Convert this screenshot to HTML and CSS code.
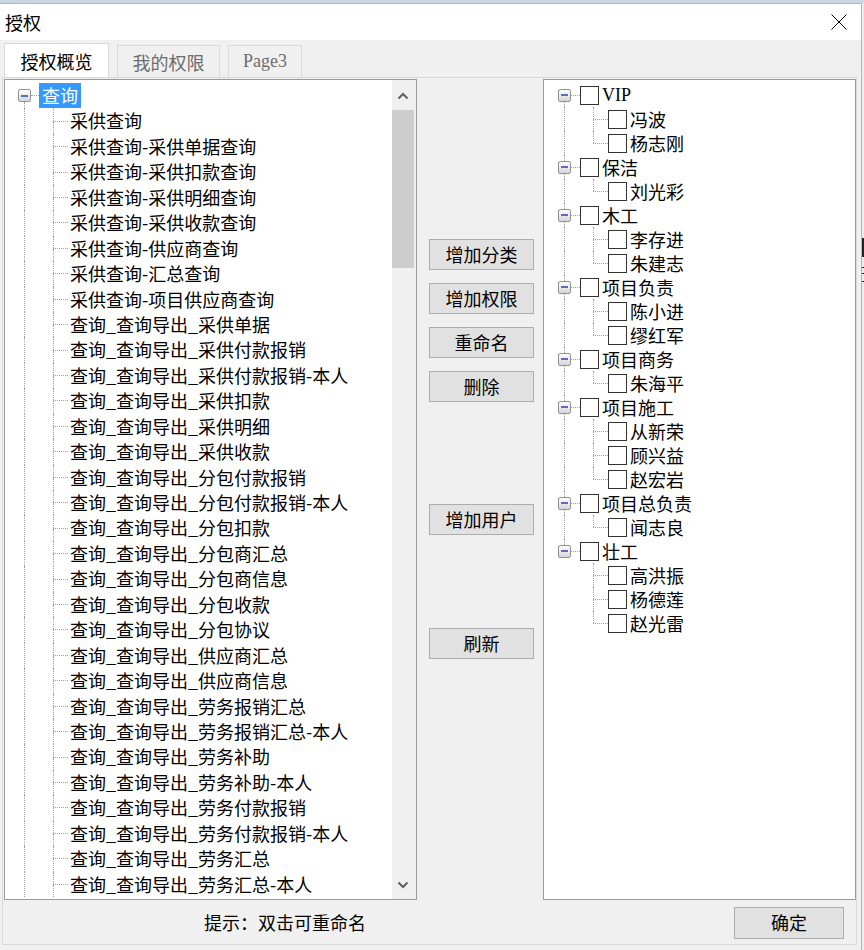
FILE: index.html
```html
<!DOCTYPE html>
<html lang="zh-CN">
<head>
<meta charset="utf-8">
<title>授权</title>
<link rel="stylesheet" href="styles.css">
</head>
<body>
<div class="desk-top"></div>
<div class="frame">
  <div class="window">
    <div class="titlebar">
      <span class="title">授权</span>
      <svg class="close" width="16" height="16" viewBox="0 0 16 16"><line x1="0.5" y1="0.5" x2="15.5" y2="15.5" stroke="#000" stroke-width="1"/><line x1="15.5" y1="0.5" x2="0.5" y2="15.5" stroke="#000" stroke-width="1"/></svg>
    </div>
    <div class="tabs">
      <div class="tab active">授权概览</div>
      <div class="tab t2">我的权限</div>
      <div class="tab t3 lat">Page3</div>
    </div>
    <div class="panel">
      <div class="main">
        <div class="tree left">
          <div class="tree-body">
            <div class="lrow"><span class="exp"><i class="seg"></i><b class="box"><i></i></b><i class="seg line"></i></span><span class="dash"><i></i></span><span class="sel">查询</span></div>
            <div class="lrow"><span class="g1 line"></span><span class="g2"><i class="u"></i><i class="h"></i><i class="d"></i></span><span class="txt">采供查询</span></div>
            <div class="lrow"><span class="g1 line"></span><span class="g2"><i class="u"></i><i class="h"></i><i class="d"></i></span><span class="txt">采供查询-采供单据查询</span></div>
            <div class="lrow"><span class="g1 line"></span><span class="g2"><i class="u"></i><i class="h"></i><i class="d"></i></span><span class="txt">采供查询-采供扣款查询</span></div>
            <div class="lrow"><span class="g1 line"></span><span class="g2"><i class="u"></i><i class="h"></i><i class="d"></i></span><span class="txt">采供查询-采供明细查询</span></div>
            <div class="lrow"><span class="g1 line"></span><span class="g2"><i class="u"></i><i class="h"></i><i class="d"></i></span><span class="txt">采供查询-采供收款查询</span></div>
            <div class="lrow"><span class="g1 line"></span><span class="g2"><i class="u"></i><i class="h"></i><i class="d"></i></span><span class="txt">采供查询-供应商查询</span></div>
            <div class="lrow"><span class="g1 line"></span><span class="g2"><i class="u"></i><i class="h"></i><i class="d"></i></span><span class="txt">采供查询-汇总查询</span></div>
            <div class="lrow"><span class="g1 line"></span><span class="g2"><i class="u"></i><i class="h"></i><i class="d"></i></span><span class="txt">采供查询-项目供应商查询</span></div>
            <div class="lrow"><span class="g1 line"></span><span class="g2"><i class="u"></i><i class="h"></i><i class="d"></i></span><span class="txt">查询_查询导出_采供单据</span></div>
            <div class="lrow"><span class="g1 line"></span><span class="g2"><i class="u"></i><i class="h"></i><i class="d"></i></span><span class="txt">查询_查询导出_采供付款报销</span></div>
            <div class="lrow"><span class="g1 line"></span><span class="g2"><i class="u"></i><i class="h"></i><i class="d"></i></span><span class="txt">查询_查询导出_采供付款报销-本人</span></div>
            <div class="lrow"><span class="g1 line"></span><span class="g2"><i class="u"></i><i class="h"></i><i class="d"></i></span><span class="txt">查询_查询导出_采供扣款</span></div>
            <div class="lrow"><span class="g1 line"></span><span class="g2"><i class="u"></i><i class="h"></i><i class="d"></i></span><span class="txt">查询_查询导出_采供明细</span></div>
            <div class="lrow"><span class="g1 line"></span><span class="g2"><i class="u"></i><i class="h"></i><i class="d"></i></span><span class="txt">查询_查询导出_采供收款</span></div>
            <div class="lrow"><span class="g1 line"></span><span class="g2"><i class="u"></i><i class="h"></i><i class="d"></i></span><span class="txt">查询_查询导出_分包付款报销</span></div>
            <div class="lrow"><span class="g1 line"></span><span class="g2"><i class="u"></i><i class="h"></i><i class="d"></i></span><span class="txt">查询_查询导出_分包付款报销-本人</span></div>
            <div class="lrow"><span class="g1 line"></span><span class="g2"><i class="u"></i><i class="h"></i><i class="d"></i></span><span class="txt">查询_查询导出_分包扣款</span></div>
            <div class="lrow"><span class="g1 line"></span><span class="g2"><i class="u"></i><i class="h"></i><i class="d"></i></span><span class="txt">查询_查询导出_分包商汇总</span></div>
            <div class="lrow"><span class="g1 line"></span><span class="g2"><i class="u"></i><i class="h"></i><i class="d"></i></span><span class="txt">查询_查询导出_分包商信息</span></div>
            <div class="lrow"><span class="g1 line"></span><span class="g2"><i class="u"></i><i class="h"></i><i class="d"></i></span><span class="txt">查询_查询导出_分包收款</span></div>
            <div class="lrow"><span class="g1 line"></span><span class="g2"><i class="u"></i><i class="h"></i><i class="d"></i></span><span class="txt">查询_查询导出_分包协议</span></div>
            <div class="lrow"><span class="g1 line"></span><span class="g2"><i class="u"></i><i class="h"></i><i class="d"></i></span><span class="txt">查询_查询导出_供应商汇总</span></div>
            <div class="lrow"><span class="g1 line"></span><span class="g2"><i class="u"></i><i class="h"></i><i class="d"></i></span><span class="txt">查询_查询导出_供应商信息</span></div>
            <div class="lrow"><span class="g1 line"></span><span class="g2"><i class="u"></i><i class="h"></i><i class="d"></i></span><span class="txt">查询_查询导出_劳务报销汇总</span></div>
            <div class="lrow"><span class="g1 line"></span><span class="g2"><i class="u"></i><i class="h"></i><i class="d"></i></span><span class="txt">查询_查询导出_劳务报销汇总-本人</span></div>
            <div class="lrow"><span class="g1 line"></span><span class="g2"><i class="u"></i><i class="h"></i><i class="d"></i></span><span class="txt">查询_查询导出_劳务补助</span></div>
            <div class="lrow"><span class="g1 line"></span><span class="g2"><i class="u"></i><i class="h"></i><i class="d"></i></span><span class="txt">查询_查询导出_劳务补助-本人</span></div>
            <div class="lrow"><span class="g1 line"></span><span class="g2"><i class="u"></i><i class="h"></i><i class="d"></i></span><span class="txt">查询_查询导出_劳务付款报销</span></div>
            <div class="lrow"><span class="g1 line"></span><span class="g2"><i class="u"></i><i class="h"></i><i class="d"></i></span><span class="txt">查询_查询导出_劳务付款报销-本人</span></div>
            <div class="lrow"><span class="g1 line"></span><span class="g2"><i class="u"></i><i class="h"></i><i class="d"></i></span><span class="txt">查询_查询导出_劳务汇总</span></div>
            <div class="lrow"><span class="g1 line"></span><span class="g2"><i class="u"></i><i class="h"></i><i class="d"></i></span><span class="txt">查询_查询导出_劳务汇总-本人</span></div>
          </div>
          <div class="vscroll">
            <div class="sb-btn"><svg width="12" height="8" viewBox="0 0 12 8"><polyline points="1.5,6.5 6,2 10.5,6.5" fill="none" stroke="#606060" stroke-width="2"/></svg></div>
            <div class="thumb"></div>
            <div class="sb-space"></div>
            <div class="sb-btn dn"><svg width="12" height="8" viewBox="0 0 12 8"><polyline points="1.5,1.5 6,6 10.5,1.5" fill="none" stroke="#606060" stroke-width="2"/></svg></div>
          </div>
        </div>
        <div class="mid">
          <button class="btn b1">增加分类</button>
          <button class="btn b2">增加权限</button>
          <button class="btn b2">重命名</button>
          <button class="btn b2">删除</button>
          <button class="btn b5">增加用户</button>
          <button class="btn b6">刷新</button>
        </div>
        <div class="tree right">
          <div class="rrow"><span class="exp r"><i class="seg"></i><b class="box"><i></i></b><i class="seg line"></i></span><span class="dash r"><i></i></span><span class="cb"></span><span class="txt lat">VIP</span></div>
          <div class="rrow"><span class="g1 r line"></span><span class="g2"><i class="u"></i><i class="h"></i><i class="d"></i></span><span class="cb"></span><span class="txt">冯波</span></div>
          <div class="rrow"><span class="g1 r line"></span><span class="g2"><i class="u"></i><i class="h"></i><i class="d none"></i></span><span class="cb"></span><span class="txt">杨志刚</span></div>

          <div class="rrow"><span class="exp r"><i class="seg line"></i><b class="box"><i></i></b><i class="seg line"></i></span><span class="dash r"><i></i></span><span class="cb"></span><span class="txt">保洁</span></div>
          <div class="rrow"><span class="g1 r line"></span><span class="g2"><i class="u"></i><i class="h"></i><i class="d none"></i></span><span class="cb"></span><span class="txt">刘光彩</span></div>

          <div class="rrow"><span class="exp r"><i class="seg line"></i><b class="box"><i></i></b><i class="seg line"></i></span><span class="dash r"><i></i></span><span class="cb"></span><span class="txt">木工</span></div>
          <div class="rrow"><span class="g1 r line"></span><span class="g2"><i class="u"></i><i class="h"></i><i class="d"></i></span><span class="cb"></span><span class="txt">李存进</span></div>
          <div class="rrow"><span class="g1 r line"></span><span class="g2"><i class="u"></i><i class="h"></i><i class="d none"></i></span><span class="cb"></span><span class="txt">朱建志</span></div>

          <div class="rrow"><span class="exp r"><i class="seg line"></i><b class="box"><i></i></b><i class="seg line"></i></span><span class="dash r"><i></i></span><span class="cb"></span><span class="txt">项目负责</span></div>
          <div class="rrow"><span class="g1 r line"></span><span class="g2"><i class="u"></i><i class="h"></i><i class="d"></i></span><span class="cb"></span><span class="txt">陈小进</span></div>
          <div class="rrow"><span class="g1 r line"></span><span class="g2"><i class="u"></i><i class="h"></i><i class="d none"></i></span><span class="cb"></span><span class="txt">缪红军</span></div>

          <div class="rrow"><span class="exp r"><i class="seg line"></i><b class="box"><i></i></b><i class="seg line"></i></span><span class="dash r"><i></i></span><span class="cb"></span><span class="txt">项目商务</span></div>
          <div class="rrow"><span class="g1 r line"></span><span class="g2"><i class="u"></i><i class="h"></i><i class="d none"></i></span><span class="cb"></span><span class="txt">朱海平</span></div>

          <div class="rrow"><span class="exp r"><i class="seg line"></i><b class="box"><i></i></b><i class="seg line"></i></span><span class="dash r"><i></i></span><span class="cb"></span><span class="txt">项目施工</span></div>
          <div class="rrow"><span class="g1 r line"></span><span class="g2"><i class="u"></i><i class="h"></i><i class="d"></i></span><span class="cb"></span><span class="txt">从新荣</span></div>
          <div class="rrow"><span class="g1 r line"></span><span class="g2"><i class="u"></i><i class="h"></i><i class="d"></i></span><span class="cb"></span><span class="txt">顾兴益</span></div>
          <div class="rrow"><span class="g1 r line"></span><span class="g2"><i class="u"></i><i class="h"></i><i class="d none"></i></span><span class="cb"></span><span class="txt">赵宏岩</span></div>

          <div class="rrow"><span class="exp r"><i class="seg line"></i><b class="box"><i></i></b><i class="seg line"></i></span><span class="dash r"><i></i></span><span class="cb"></span><span class="txt">项目总负责</span></div>
          <div class="rrow"><span class="g1 r line"></span><span class="g2"><i class="u"></i><i class="h"></i><i class="d none"></i></span><span class="cb"></span><span class="txt">闻志良</span></div>

          <div class="rrow"><span class="exp r"><i class="seg line"></i><b class="box"><i></i></b><i class="seg"></i></span><span class="dash r"><i></i></span><span class="cb"></span><span class="txt">壮工</span></div>
          <div class="rrow"><span class="g1 r"></span><span class="g2"><i class="u"></i><i class="h"></i><i class="d"></i></span><span class="cb"></span><span class="txt">高洪振</span></div>
          <div class="rrow"><span class="g1 r"></span><span class="g2"><i class="u"></i><i class="h"></i><i class="d"></i></span><span class="cb"></span><span class="txt">杨德莲</span></div>
          <div class="rrow"><span class="g1 r"></span><span class="g2"><i class="u"></i><i class="h"></i><i class="d none"></i></span><span class="cb"></span><span class="txt">赵光雷</span></div>
        </div>
      </div>
      <div class="foot">
        <span class="hint">提示：双击可重命名</span>
        <button class="btn ok">确定</button>
      </div>
    </div>
  </div>
  <div class="desk-right"><i class="m1"></i><i class="m2"></i><i class="m3"></i><i class="m4"></i></div>
</div>
</body>
</html>
```

FILE: styles.css
```css
* { box-sizing: border-box; }
html, body { margin: 0; padding: 0; }
body {
  width: 864px;
  height: 950px;
  overflow: hidden;
  background: #e8eaec;
  font-family: "Noto Sans CJK SC", "Noto Sans", sans-serif;
  font-size: 18px;
  color: #000;
}
i, b { font-style: normal; display: block; }

.desk-top { height: 3px; background: #cbd6e3; }
.frame { display: flex; height: 947px; }
.window {
  width: 862px;
  height: 947px;
  flex: none;
  border-top: 1px solid #a7cb6b;
  border-right: 1px solid #a7cb6b;
  background: #f0f0f0;
  display: flex;
  flex-direction: column;
}
.desk-right { flex: 1; background: #ececec; display: flex; flex-direction: column; }
.desk-right i { background: #222; }
.desk-right .m1 { margin-top: 235px; height: 19px; }
.desk-right .m2 { margin-top: 10px; height: 1px; }
.desk-right .m3 { margin-top: 5px; height: 1px; }
.desk-right .m4 { margin-top: 7px; height: 1px; }

.titlebar {
  height: 36px;
  flex: none;
  background: #fff;
  display: flex;
  align-items: center;
  justify-content: space-between;
  padding: 0 14px 0 5px;
}
.title { line-height: 36px; }
.close { display: block; }

.tabs {
  height: 37px;
  flex: none;
  display: flex;
  align-items: flex-end;
  padding-left: 4px;
}
.tab {
  height: 32px;
  display: flex;
  align-items: center;
  justify-content: center;
  border: 1px solid #d9d9d9;
  border-bottom: none;
  background: #f0f0f0;
  color: #6d6d6d;
}
.tab.active { width: 105px; height: 34px; background: #fff; color: #000; }
.tab.t2 { width: 103px; margin-left: 8px; }
.tab.t3 { width: 74px; margin-left: 8px; }
.lat { font-family: "Liberation Serif", "Noto Sans CJK SC", serif; }

.panel {
  margin-left: 2px;
  width: 855px;
  height: 868px;
  flex: none;
  border: 1px solid #d9d9d9;
  display: flex;
  flex-direction: column;
}
.main { display: flex; margin: 1px 0 0 1px; height: 821px; flex: none; }

.tree {
  height: 821px;
  border: 1px solid #9a9a9a;
  background: #fff;
  overflow: hidden;
}
.tree.left { width: 413px; display: flex; }
.tree.right { width: 313px; padding-top: 3px; }
.tree-body { flex: 1; padding-top: 3px; overflow: hidden; }

/* left tree rows */
.lrow { display: flex; height: 25.45px; line-height: 25px; }
.rrow { display: flex; height: 24px; line-height: 24px; }

.exp { display: flex; flex-direction: column; width: 13px; margin-left: 13px; flex: none; }
.exp.r { margin-left: 14px; }
.seg { flex: 1; margin-left: 6px; }
.line { border-left: 1px dotted #a0a0a0; }
.box {
  width: 13px;
  height: 13px;
  flex: none;
  border: 1px solid #939393;
  border-radius: 2px;
  background: linear-gradient(#ffffff, #d6d6d6);
  display: flex;
  align-items: center;
  justify-content: center;
}
.box i { width: 7px; height: 2px; background: #5071c4; }
.dash { width: 8px; flex: none; display: flex; align-items: center; }
.dash.r { width: 9px; }
.dash i { flex: 1; border-top: 1px dotted #a0a0a0; }
.sel { background: #3399ff; color: #fff; padding: 0 3px; white-space: nowrap; }

.g1 { width: 29px; margin-left: 19px; flex: none; }
.g1.r { margin-left: 20px; }
.g2 { width: 15px; flex: none; display: flex; flex-direction: column; }
.g2 .u, .g2 .d { flex: 1; border-left: 1px dotted #a0a0a0; }
.g2 .d.none { border-left: none; }
.g2 .h { border-top: 1px dotted #a0a0a0; }
.lrow .txt { margin-left: 2px; white-space: nowrap; }
.rrow .txt { margin-left: 3px; white-space: nowrap; }
.cb {
  width: 19px;
  height: 19px;
  flex: none;
  align-self: center;
  border: 1px solid #333;
  background: #fff;
}

/* scrollbar */
.vscroll {
  width: 24px;
  flex: none;
  background: #f0f0f0;
  display: flex;
  flex-direction: column;
  padding-top: 2px;
}
.sb-btn { height: 28px; display: flex; align-items: center; justify-content: center; flex: none; }
.sb-btn.dn { height: 26px; padding-bottom: 2px; }
.sb-btn svg { display: block; margin-right: 2px; }
.thumb { height: 158px; width: 22px; background: #cdcdcd; flex: none; }
.sb-space { flex: 1; }

/* middle buttons */
.mid {
  width: 126px;
  flex: none;
  display: flex;
  flex-direction: column;
  align-items: flex-start;
  padding-left: 12px;
}
.btn {
  width: 105px;
  height: 31px;
  margin: 0;
  padding: 0;
  background: #e1e1e1;
  border: 1px solid #adadad;
  font-family: inherit;
  font-size: 18px;
  line-height: 29px;
  color: #000;
}
.b1 { margin-top: 160px; }
.b2 { margin-top: 13px; }
.b5 { margin-top: 102px; }
.b6 { margin-top: 93px; }

.foot { flex: 1; display: flex; align-items: center; }
.hint { margin-left: 201px; }
.btn.ok { width: 110px; height: 32px; margin-left: auto; margin-right: 12px; margin-top: 1px; }
```
